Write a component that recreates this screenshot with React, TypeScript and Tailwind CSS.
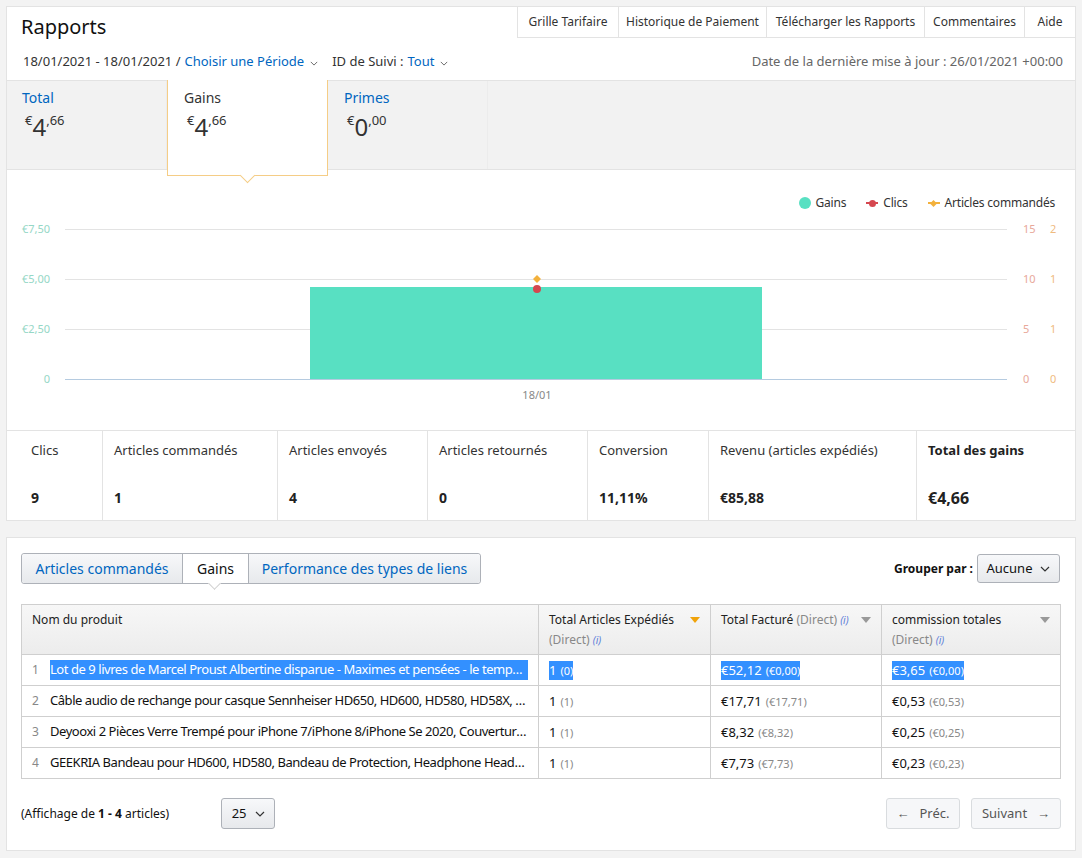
import React from 'react';

// Reports dashboard: summary tabs, earnings chart, totals row and products table.

const navItems = [
  { label: 'Grille Tarifaire', w: 'w-[101px]' },
  { label: 'Historique de Paiement', w: 'w-[148px]' },
  { label: 'Télécharger les Rapports', w: 'w-[158px]' },
  { label: 'Commentaires', w: 'w-[100px]' },
  { label: 'Aide', w: 'w-[50px]' },
];

const stats = [
  { label: 'Clics', value: '9', w: 'w-[96px] pl-[24px]' },
  { label: 'Articles commandés', value: '1', w: 'w-[175px] pl-[11px]' },
  { label: 'Articles envoyés', value: '4', w: 'w-[150px] pl-[11px]' },
  { label: 'Articles retournés', value: '0', w: 'w-[160px] pl-[11px]' },
  { label: 'Conversion', value: '11,11%', w: 'w-[121px] pl-[11px]' },
  { label: 'Revenu (articles expédiés)', value: '€85,88', w: 'w-[208px] pl-[11px]' },
];

const rows = [
  {
    name: 'Lot de 9 livres de Marcel Proust Albertine disparue - Maximes et pensées - le temps retrouvé',
    qty: '1',
    qtyD: '(0)',
    billed: '€52,12',
    billedD: '(€0,00)',
    fee: '€3,65',
    feeD: '(€0,00)',
  },
  {
    name: 'Câble audio de rechange pour casque Sennheiser HD650, HD600, HD580, HD58X, HD660S',
    qty: '1',
    qtyD: '(1)',
    billed: '€17,71',
    billedD: '(€17,71)',
    fee: '€0,53',
    feeD: '(€0,53)',
  },
  {
    name: 'Deyooxi 2 Pièces Verre Trempé pour iPhone 7/iPhone 8/iPhone Se 2020, Couverture complète',
    qty: '1',
    qtyD: '(1)',
    billed: '€8,32',
    billedD: '(€8,32)',
    fee: '€0,25',
    feeD: '(€0,25)',
  },
  {
    name: 'GEEKRIA Bandeau pour HD600, HD580, Bandeau de Protection, Headphone Headband Cover',
    qty: '1',
    qtyD: '(1)',
    billed: '€7,73',
    billedD: '(€7,73)',
    fee: '€0,23',
    feeD: '(€0,23)',
  },
];

function Chevron({ className = '' }: { className?: string }) {
  return (
    <svg viewBox="0 0 10 6" className={className} fill="none" stroke="currentColor" strokeWidth="1.2">
      <path d="M1 1l4 4 4-4" />
    </svg>
  );
}

function Money({ euros, cents }: { euros: string; cents: string }) {
  return (
    <div className="flex items-start text-[#333] leading-none">
      <span className="text-[13px] mt-[1px]">€</span>
      <span className="text-[24px] mt-[2px]">{euros}</span>
      <span className="text-[13px] mt-[1px]">,{cents}</span>
    </div>
  );
}

function Chart() {
  const grid = [229.5, 279.5, 329.5];
  return (
    <svg width="1068" height="200" viewBox="7 215 1068 200" className="block">
      {grid.map((y) => (
        <line key={y} x1="65" x2="1007" y1={y} y2={y} stroke="#e3e3e3" strokeWidth="1" />
      ))}
      <line x1="65" x2="1007" y1="379.5" y2="379.5" stroke="#b5cbe0" strokeWidth="1" />
      <g fontSize="11" fill="#95d7c6" textAnchor="end" fontFamily="Noto Sans, sans-serif">
        <text x="50" y="233">€7,50</text>
        <text x="50" y="283">€5,00</text>
        <text x="50" y="333">€2,50</text>
        <text x="50" y="383">0</text>
      </g>
      <g fontSize="11" fill="#e8a89a" fontFamily="Noto Sans, sans-serif">
        <text x="1023" y="233">15</text>
        <text x="1023" y="283">10</text>
        <text x="1023" y="333">5</text>
        <text x="1023" y="383">0</text>
      </g>
      <g fontSize="11" fill="#efbb7f" fontFamily="Noto Sans, sans-serif">
        <text x="1050" y="233">2</text>
        <text x="1050" y="283">1</text>
        <text x="1050" y="333">1</text>
        <text x="1050" y="383">0</text>
      </g>
      <rect x="310" y="287" width="452" height="92" fill="#58e0c2" />
      <circle cx="537" cy="289" r="4" fill="#d5474f" />
      <path d="M537 275l4 4-4 4-4-4z" fill="#f3b13c" />
      <text x="537" y="399" fontSize="11" fill="#888" textAnchor="middle" fontFamily="Noto Sans, sans-serif">
        18/01
      </text>
    </svg>
  );
}

function InfoI() {
  return <span className="text-[10px] italic text-[#5a7bd8]">(i)</span>;
}

function SortArrow({ active }: { active?: boolean }) {
  return (
    <svg viewBox="0 0 10 6" className="w-[10px] h-[6px] mt-[6px] shrink-0">
      <path d="M0 0h10L5 6z" fill={active ? '#f0a30a' : '#999'} />
    </svg>
  );
}

function Amount({ main, sub, sel }: { main: string; sub: string; sel: boolean }) {
  return (
    <div className="flex items-center">
      <span className={`pr-[4px] leading-[19px] ${sel ? 'bg-[#3390ff] text-white' : 'text-[#111]'}`}>{main}</span>
      <span className={`text-[11px] leading-[19px] ${sel ? 'bg-[#3390ff] text-white' : 'text-[#888]'}`}>{sub}</span>
    </div>
  );
}

export default function App() {
  return (
    <div className="min-h-[858px] bg-[#f3f3f3] px-[6px] pt-[6px] pb-[8px] font-['Noto_Sans',sans-serif] text-[#333]">
      {/* Summary card */}
      <div className="border border-[#e3e3e3] bg-white">
        <div className="relative h-[73px]">
          <h1 className="pl-[14px] pt-[6px] text-[20px] leading-[28px] text-[#111]">Rapports</h1>
          <div className="absolute right-0 top-0 flex h-[31px] border-l border-b border-[#e3e3e3] text-[12px] text-[#333]">
            {navItems.map((n, i) => (
              <div
                key={n.label}
                className={`${n.w} flex items-center justify-center ${i < navItems.length - 1 ? 'border-r border-[#e3e3e3]' : ''}`}
              >
                {n.label}
              </div>
            ))}
          </div>
          <div className="mt-[11px] flex items-center pl-[16px] pr-[12px] text-[13px]">
            <span className="text-[#333]">18/01/2021 - 18/01/2021 / </span>
            <span className="ml-[4px] text-[#0066c0]">Choisir une Période</span>
            <Chevron className="ml-[6px] mt-[3px] w-[8px] h-[5px] text-[#666]" />
            <span className="ml-[14px]">ID de Suivi : </span>
            <span className="ml-[4px] text-[#0066c0]">Tout</span>
            <Chevron className="ml-[6px] mt-[3px] w-[8px] h-[5px] text-[#666]" />
            <span className="ml-auto text-[#666]">Date de la dernière mise à jour : 26/01/2021 +00:00</span>
          </div>
        </div>

        {/* Summary tabs */}
        <div className="flex h-[90px] border-y border-[#e3e3e3] bg-[#f2f2f2]">
          <div className="w-[160px] border-r border-[#ececec] pl-[15px] pt-[7px]">
            <div className="text-[14px] text-[#0066c0] leading-[20px]">Total</div>
            <div className="mt-[5px] pl-[3px]">
              <Money euros="4" cents="66" />
            </div>
          </div>
          <div className="relative z-10 -mt-px h-[96px] w-[161px] border-x border-b border-[#f5cd86] bg-white pl-[16px] pt-[8px]">
            <div className="text-[14px] text-[#333] leading-[20px]">Gains</div>
            <div className="mt-[5px] pl-[3px]">
              <Money euros="4" cents="66" />
            </div>
            <div className="absolute bottom-[-6px] left-[74px] h-[11px] w-[11px] rotate-45 border-r border-b border-[#f5cd86] bg-white" />
          </div>
          <div className="w-[160px] border-r border-[#ececec] pl-[16px] pt-[7px]">
            <div className="text-[14px] text-[#0066c0] leading-[20px]">Primes</div>
            <div className="mt-[5px] pl-[3px]">
              <Money euros="0" cents="00" />
            </div>
          </div>
        </div>

        {/* Chart */}
        <div className="h-[260px]">
          <div className="flex items-center justify-end pr-[20px] pt-[25px] text-[12px] tracking-[-0.2px] text-[#333] leading-[16px]">
            <span className="h-[12px] w-[12px] rounded-full bg-[#58e0c2]" />
            <span className="ml-[5px]">Gains</span>
            <span className="relative ml-[20px] flex h-[12px] w-[12px] items-center justify-center">
              <span className="absolute h-[2px] w-[12px] bg-[#d5474f]" />
              <span className="h-[7px] w-[7px] rounded-full bg-[#d5474f]" />
            </span>
            <span className="ml-[5px]">Clics</span>
            <span className="relative ml-[20px] flex h-[12px] w-[12px] items-center justify-center">
              <span className="absolute h-[2px] w-[12px] bg-[#f3b13c]" />
              <span className="h-[5px] w-[5px] rotate-45 bg-[#f3b13c]" />
            </span>
            <span className="ml-[5px]">Articles commandés</span>
          </div>
          <div className="mt-[4px]">
            <Chart />
          </div>
        </div>

        {/* Totals row */}
        <div className="flex h-[90px] border-t border-[#e3e3e3]">
          {stats.map((s) => (
            <div key={s.label} className={`${s.w} flex flex-col border-r border-[#e3e3e3] pt-[9px]`}>
              <div className="text-[13px] leading-[20px] text-[#333]">{s.label}</div>
              <div className="mt-[28px] text-[14px] font-bold leading-[20px] text-[#222]">{s.value}</div>
            </div>
          ))}
          <div className="flex flex-1 flex-col pl-[11px] pt-[9px]">
            <div className="text-[13px] font-bold leading-[20px] text-[#222]">Total des gains</div>
            <div className="mt-[28px] text-[16px] font-bold leading-[20px] text-[#222]">€4,66</div>
          </div>
        </div>
      </div>

      {/* Products card */}
      <div className="mt-[16px] border border-[#e3e3e3] bg-white px-[14px] pt-[15px] pb-[21px]">
        <div className="flex items-center justify-between">
          <div className="flex h-[31px] rounded-[3px] border border-[#adb1b8] text-[14px]">
            <div className="flex w-[160px] items-center justify-center rounded-l-[3px] bg-gradient-to-b from-[#f7f8fa] to-[#e7e9ec] text-[#0066c0]">
              Articles commandés
            </div>
            <div className="relative flex w-[67px] items-center justify-center border-x border-[#adb1b8] bg-white text-[#111]">
              Gains
              <div className="absolute bottom-[-5px] left-[27px] h-[9px] w-[9px] rotate-45 border-r border-b border-[#cfcfcf] bg-white" />
            </div>
            <div className="flex w-[231px] items-center justify-center rounded-r-[3px] bg-gradient-to-b from-[#f7f8fa] to-[#e7e9ec] text-[#0066c0]">
              Performance des types de liens
            </div>
          </div>
          <div className="flex items-center pr-[1px]">
            <span className="text-[12px] font-bold text-[#111]">Grouper par :</span>
            <div className="ml-[4px] flex h-[29px] w-[83px] items-center justify-center gap-[8px] rounded-[3px] border border-[#adb1b8] bg-gradient-to-b from-[#f7f8fa] to-[#e7e9ec] text-[13px] text-[#111]">
              Aucune
              <Chevron className="w-[10px] h-[6px] text-[#333]" />
            </div>
          </div>
        </div>

        <table className="mt-[20px] w-full table-fixed border-collapse border border-[#cfcfcf] text-[13px]">
          <colgroup>
            <col className="w-[517px]" />
            <col className="w-[172px]" />
            <col className="w-[171px]" />
            <col />
          </colgroup>
          <thead>
            <tr className="h-[50px] bg-gradient-to-b from-[#f7f7f7] to-[#ececec] text-[12px] text-[#222]">
              <th className="border border-[#cfcfcf] pl-[10px] pt-[6px] text-left align-top font-normal">Nom du produit</th>
              <th className="border border-[#cfcfcf] px-[10px] pt-[6px] text-left align-top font-normal">
                <div className="flex justify-between">
                  <span>Total Articles Expédiés</span>
                  <SortArrow active />
                </div>
                <div className="mt-[2px] text-[#888]">
                  (Direct) <InfoI />
                </div>
              </th>
              <th className="border border-[#cfcfcf] px-[10px] pt-[6px] text-left align-top font-normal">
                <div className="flex justify-between">
                  <span>
                    Total Facturé <span className="text-[#888]">(Direct)</span> <InfoI />
                  </span>
                  <SortArrow />
                </div>
              </th>
              <th className="border border-[#cfcfcf] px-[10px] pt-[6px] text-left align-top font-normal">
                <div className="flex justify-between">
                  <span>commission totales</span>
                  <SortArrow />
                </div>
                <div className="mt-[2px] text-[#888]">
                  (Direct) <InfoI />
                </div>
              </th>
            </tr>
          </thead>
          <tbody>
            {rows.map((r, i) => {
              const sel = i === 0;
              return (
                <tr key={i} className="h-[31px]">
                  <td className="border border-[#cfcfcf] pl-[10px] pr-[10px]">
                    <div className="flex items-center">
                      <span className="w-[18px] shrink-0 text-[12px] text-[#888]">{i + 1}</span>
                      <span
                        className={`truncate tracking-[-0.45px] ${sel ? 'bg-[#3390ff] text-white' : 'text-[#111]'}`}
                      >
                        {r.name}
                      </span>
                    </div>
                  </td>
                  <td className="border border-[#cfcfcf] px-[10px]">
                    <Amount main={r.qty} sub={r.qtyD} sel={sel} />
                  </td>
                  <td className="border border-[#cfcfcf] px-[10px]">
                    <Amount main={r.billed} sub={r.billedD} sel={sel} />
                  </td>
                  <td className="border border-[#cfcfcf] px-[10px]">
                    <Amount main={r.fee} sub={r.feeD} sel={sel} />
                  </td>
                </tr>
              );
            })}
          </tbody>
        </table>

        <div className="mt-[19px] flex items-center">
          <span className="text-[12px] text-[#111]">
            (Affichage de <b>1 - 4</b> articles)
          </span>
          <div className="ml-[52px] flex h-[31px] w-[54px] items-center justify-center gap-[8px] rounded-[3px] border border-[#adb1b8] bg-gradient-to-b from-[#f7f8fa] to-[#e7e9ec] text-[13px] text-[#111]">
            25
            <Chevron className="w-[10px] h-[6px] text-[#333]" />
          </div>
          <div className="ml-auto flex gap-[11px]">
            <div className="flex h-[31px] w-[74px] items-center justify-center gap-[10px] rounded-[3px] border border-[#d9dcdf] bg-[#f6f7f9] text-[13px] text-[#555]">
              <span>←</span>
              <span>Préc.</span>
            </div>
            <div className="flex h-[31px] w-[90px] items-center justify-center gap-[10px] rounded-[3px] border border-[#d9dcdf] bg-[#f6f7f9] text-[13px] text-[#555]">
              <span>Suivant</span>
              <span>→</span>
            </div>
          </div>
        </div>
      </div>
    </div>
  );
}
